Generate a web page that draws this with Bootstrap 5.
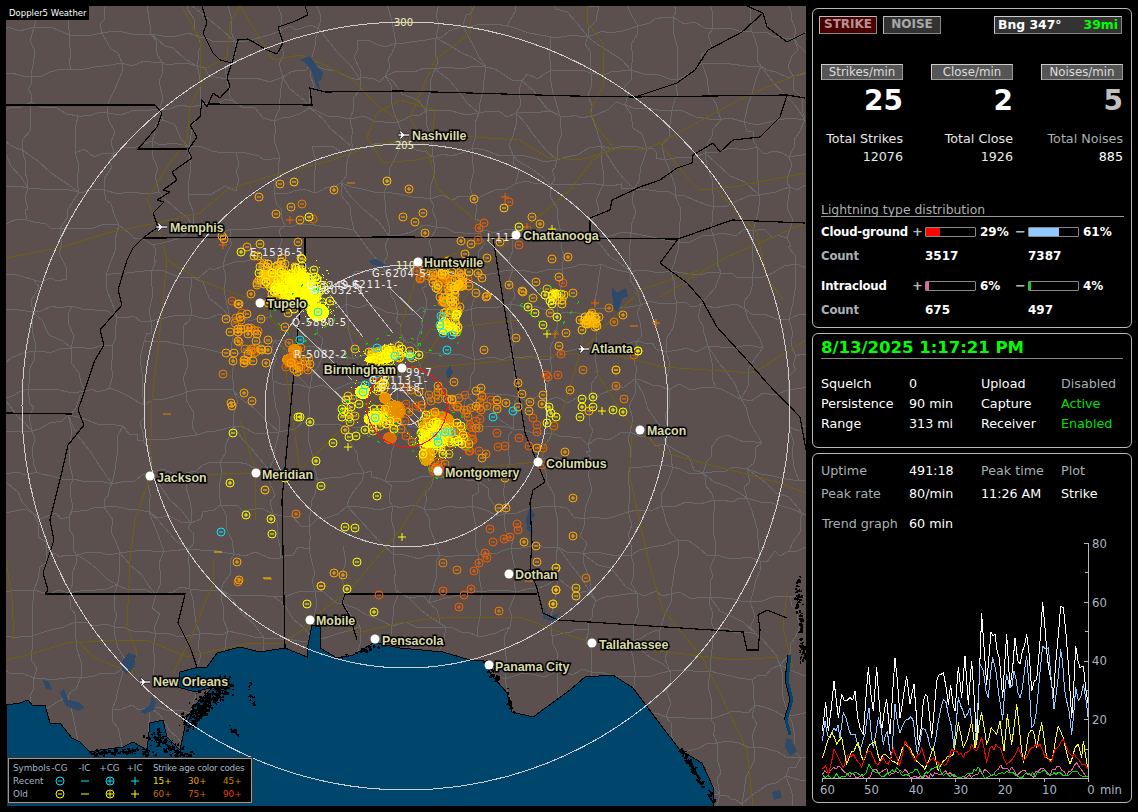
<!DOCTYPE html>
<html lang="en">
<head>
<meta charset="utf-8">
<title>Doppler5 Weather</title>
<link rel="stylesheet" href="https://cdn.jsdelivr.net/npm/bootstrap@5.3.0/dist/css/bootstrap.min.css">
<style>
html,body{background:#000;margin:0;height:100%;overflow:hidden}
body{font-family:"DejaVu Sans",sans-serif;font-size:12.7px;line-height:16px;color:#fff}
.app-shell{padding:6px;width:1138px;height:812px}
.map-wrap{width:800px;height:800px;flex:none;background:#5b504d}
.map-wrap svg{display:block}
.map-title{left:0;top:0;width:83px;height:14px;background:#000;color:#fff;font-size:8.5px;line-height:14px;padding-left:3px;white-space:nowrap}
.legend-box{left:2px;top:752px;width:244px;height:45px;background:#000;border:1px solid #9a9a9a;outline:1px solid #333;display:grid;grid-template-columns:34px 25px 25px 25px 25px 35px 35px 35px;grid-auto-rows:13px;padding:3px 0 0 4px;font-size:8.8px;line-height:13px;color:#a8b4c4;white-space:nowrap}
.legend-box>div{text-align:center}
.legend-box .lft{text-align:left}
.legend-box .age-title{grid-column:span 3;padding-left:6px;letter-spacing:-.28px}
.legend-box .agec{padding-left:6px;text-align:left}
.legend-box svg{display:inline-block;vertical-align:top;margin-top:1px}
.age1{color:#e8e000}.age2{color:#e8a000}.age3{color:#c88800}.age4{color:#c87000}.age5{color:#d86000}.age6{color:#e84000}
.side-col{width:320px;margin-left:6px;padding-top:2px}
.panel-box{border:1px solid #b8b8b8;border-radius:6px;background:#000;width:320px}
.panel-a{height:320px;padding:7px 8px 0 8px}
.panel-b{height:115px;margin-top:5px;padding:2px 8px 0 8px}
.panel-c{height:350px;margin-top:5px;padding:5px 8px 0 8px}
.mode-btn{width:58px;height:18px;flex:none;font-weight:700;font-size:12px;line-height:15px;text-align:center;border:1px solid #bbb;border-right-color:#888;border-bottom-color:#888}
.mode-strike{background:#4a0000;color:#b89090;margin-left:-2px}
.mode-noise{background:#333;color:#a8a8a8;margin-left:6px}
.bng-box{width:128px;height:18px;flex:none;background:#333;border:1px solid #ccc;border-right-color:#888;border-bottom-color:#888;font-weight:700;font-size:12.4px;line-height:15px;padding:0 3px;margin-left:53px}
.text-lime{color:#00ff00}
.stat-row{gap:28px;margin-top:30px}
.stat-col{width:82px;text-align:right}
.stat-label{height:16px;line-height:14px;background:#555;border:1px solid #ccc;border-right-color:#999;border-bottom-color:#999;color:#ddd;text-align:center;font-size:11.8px}
.stat-big{font-size:28px;line-height:32px;font-weight:700;margin-top:5px}
.stat-dim{color:#c0c0c0}
.stat-name{margin-top:13px;line-height:18px;color:#e8e8e8;white-space:nowrap}
.stat-name.dimtext{color:#a8b0b4}
.dist-title{margin-top:36px;color:#a8b0b4;border-bottom:1px solid #999;height:15px;line-height:16px;width:303px;white-space:nowrap;font-size:12.4px}
.dist-grid{display:grid;grid-template-columns:91px 13px 55px 35px 13px 55px 40px;width:306px;font-weight:700;font-size:12px;line-height:16px;margin-top:7px}
.dist-grid>div{height:24px;white-space:nowrap}
.dist-grid .tall-row{height:30px}
.dist-grid .lbl{font-size:11.7px;letter-spacing:-.2px}
.cnt{color:#a8b0b4}
.sgn{color:#b8b8b8;font-size:13px}
.meter{width:51px;height:10px;border:1px solid #888;border-radius:1px;margin-top:3px;background:#000}
.meter>i{display:block;height:100%}
.time-line{font-size:16.5px;line-height:24px;font-weight:700;color:#00ff00;border-bottom:1px solid #888;height:23px;margin-bottom:15px;white-space:nowrap}
.info-grid{display:grid;grid-template-columns:88px 72px 80px 70px;line-height:20px;white-space:nowrap}
.muted-c{color:#a8b0b4}
.green-c{color:#00e000}
.info-gridb{line-height:23px}
.trend-h{margin-top:11px;display:grid;grid-template-columns:87px 80px;line-height:16px;padding-left:1px}
.graph-wrap{display:block;width:310px;height:272px;margin:-1px 0 0 -1px}
.city-name{font-family:"Liberation Sans",sans-serif;font-weight:700;font-size:12.4px;fill:#dcdcaa;stroke:#000;stroke-width:3px;paint-order:stroke;stroke-linejoin:miter}
.storm-name{font-family:"DejaVu Sans",sans-serif;font-size:10px;letter-spacing:1px;fill:#f0f0f0}
.ring-name{font-family:"DejaVu Sans",sans-serif;font-size:10px;fill:#f0f0b8}
</style>
</head>
<body>
<div class="app-shell d-flex">
  <div class="map-wrap position-relative">
    <svg id="mapsvg" width="800" height="800" viewBox="6 6 800 800" shape-rendering="crispEdges"></svg>
    <div class="map-title position-absolute">Doppler5 Weather</div>
    <div class="legend-box position-absolute">
      <div class="lft">Symbols</div><div>-CG</div><div>-IC</div><div>+CG</div><div>+IC</div><div class="lft age-title">Strike age color codes</div>
      <div class="lft">Recent</div>
      <div><svg width="10" height="10" viewBox="0 0 10 10" fill="none" stroke="#00e8ff"><circle cx="5" cy="5" r="4"/><path d="M3 5h4"/></svg></div>
      <div><svg width="10" height="10" viewBox="0 0 10 10" fill="none" stroke="#00e8ff"><path d="M1 5h8"/></svg></div>
      <div><svg width="10" height="10" viewBox="0 0 10 10" fill="none" stroke="#00e8ff"><circle cx="5" cy="5" r="4"/><path d="M2 5h6M5 2v6"/></svg></div>
      <div><svg width="10" height="10" viewBox="0 0 10 10" fill="none" stroke="#00e8ff"><path d="M1 5h8M5 1v8"/></svg></div>
      <div class="agec age1">15+</div><div class="agec age2">30+</div><div class="agec age3">45+</div>
      <div class="lft">Old</div>
      <div><svg width="10" height="10" viewBox="0 0 10 10" fill="none" stroke="#ffff00"><circle cx="5" cy="5" r="4"/><path d="M3 5h4"/></svg></div>
      <div><svg width="10" height="10" viewBox="0 0 10 10" fill="none" stroke="#ffff00"><path d="M1 5h8"/></svg></div>
      <div><svg width="10" height="10" viewBox="0 0 10 10" fill="none" stroke="#ffff00"><circle cx="5" cy="5" r="4"/><path d="M2 5h6M5 2v6"/></svg></div>
      <div><svg width="10" height="10" viewBox="0 0 10 10" fill="none" stroke="#ffff00"><path d="M1 5h8M5 1v8"/></svg></div>
      <div class="agec age4">60+</div><div class="agec age5">75+</div><div class="agec age6">90+</div>
    </div>
  </div>
  <div class="side-col d-flex flex-column">
    <section class="panel-box panel-a">
      <div class="d-flex">
        <div class="mode-btn mode-strike">STRIKE</div>
        <div class="mode-btn mode-noise">NOISE</div>
        <div class="bng-box d-flex justify-content-between"><span>Bng 347°</span><span class="text-lime">39mi</span></div>
      </div>
      <div class="d-flex stat-row">
        <div class="stat-col"><div class="stat-label">Strikes/min</div><div class="stat-big">25</div><div class="stat-name">Total Strikes<br>12076</div></div>
        <div class="stat-col"><div class="stat-label">Close/min</div><div class="stat-big">2</div><div class="stat-name">Total Close<br>1926</div></div>
        <div class="stat-col"><div class="stat-label">Noises/min</div><div class="stat-big stat-dim">5</div><div class="stat-name dimtext">Total Noises<br><span class="text-white">885</span></div></div>
      </div>
      <div class="dist-title">Lightning type distribution</div>
      <div class="dist-grid">
        <div class="lbl">Cloud-ground</div><div class="sgn">+</div><div><div class="meter"><i style="width:29%;background:#ff0000"></i></div></div><div>29%</div><div class="sgn">−</div><div><div class="meter"><i style="width:61%;background:#90c8ff"></i></div></div><div>61%</div>
        <div class="cnt tall-row lbl">Count</div><div class="tall-row"></div><div class="tall-row">3517</div><div class="tall-row"></div><div class="tall-row"></div><div class="tall-row">7387</div><div class="tall-row"></div>
        <div class="lbl">Intracloud</div><div class="sgn">+</div><div><div class="meter"><i style="width:6%;background:#e860a8"></i></div></div><div>6%</div><div class="sgn">−</div><div><div class="meter"><i style="width:4%;background:#00e000"></i></div></div><div>4%</div>
        <div class="cnt lbl">Count</div><div></div><div>675</div><div></div><div></div><div>497</div><div></div>
      </div>
    </section>
    <section class="panel-box panel-b">
      <div class="time-line">8/13/2025 1:17:21 PM</div>
      <div class="info-grid">
        <div>Squelch</div><div>0</div><div>Upload</div><div class="muted-c">Disabled</div>
        <div>Persistence</div><div>90 min</div><div>Capture</div><div class="green-c">Active</div>
        <div>Range</div><div>313 mi</div><div>Receiver</div><div class="green-c">Enabled</div>
      </div>
    </section>
    <section class="panel-box panel-c">
      <div class="info-grid info-gridb">
        <div class="muted-c">Uptime</div><div>491:18</div><div class="muted-c">Peak time</div><div class="muted-c">Plot</div>
        <div class="muted-c">Peak rate</div><div>80/min</div><div>11:26 AM</div><div>Strike</div>
      </div>
      <div class="trend-h"><div class="muted-c">Trend graph</div><div>60 min</div></div>
      <svg class="graph-wrap" viewBox="30 0 930 816">
        <g fill="none" stroke-width="3" stroke-linejoin="round" shape-rendering="crispEdges">
          <polyline id="gw" stroke="#ffffff"/>
          <polyline id="gb" stroke="#90c8ff"/>
          <polyline id="gy" stroke="#ffff00"/>
          <polyline id="gp" stroke="#e860a8"/>
          <polyline id="gg" stroke="#00e000"/>
          <polyline id="gr" stroke="#ff0000"/>
        </g>
        <g stroke="#b8b8b8" stroke-width="3" fill="none" shape-rendering="crispEdges">
          <path d="M37 742H835M835 37V742M822 37h13M826 125h9M822 213h13M826 301h9M822 390h13M826 478h9M822 566h13M826 655h9"/>
          <path d="M37 742v12M170 742v12M303 742v12M436 742v12M569 742v12M702 742v12M835 742v12"/>
        </g>
        <g fill="#a8b8c8" font-family="'DejaVu Sans',sans-serif" font-size="35">
          <text x="846" y="50">80</text><text x="846" y="227">60</text><text x="846" y="402">40</text><text x="846" y="579">20</text>
          <text x="30" y="790">60</text><text x="162" y="790">50</text><text x="296" y="790">40</text><text x="430" y="790">30</text><text x="563" y="790">20</text><text x="696" y="790">10</text><text x="832" y="790">0</text><text x="870" y="790">min</text>
        </g>
      </svg>
    </section>
  </div>
</div>
<script src="https://cdn.jsdelivr.net/npm/bootstrap@5.3.0/dist/js/bootstrap.bundle.min.js"></script>
<script>
(function(){
/* seeded random */
var s=12345;function R(){s=(s+0x6D2B79F5)|0;var t=Math.imul(s^s>>>15,1|s);t=t+Math.imul(t^t>>>7,61|t)^t;return((t^t>>>14)>>>0)/4294967296;}
function G(){return (R()+R()+R()-1.5)/0.87;}

/* trend graph */
function line(id,pts){var o=[];for(var i=0;i<pts.length;i+=2){var x=pts[i],y=pts[i+1];o.push(x+','+y);
 if(i+2<pts.length){var nx=pts[i+2],ny=pts[i+3];if(nx-x>9){var n=Math.floor((nx-x)/6);for(var k=1;k<n;k++){var f=k/n;o.push((x+(nx-x)*f).toFixed(0)+','+(y+(ny-y)*f+(G()*((id=='gw'||id=='gb')?20:8))).toFixed(0));}}}}
 document.getElementById(id).setAttribute('points',o.join(' '));}
line('gw',[37,600,47,515,55,600,72,450,85,560,95,490,110,510,120,500,135,480,150,590,160,610,175,410,190,540,200,408,215,600,230,505,240,610,255,380,270,560,290,435,300,520,312,460,325,640,340,510,352,495,365,620,380,450,400,425,415,520,422,462,435,540,445,408,455,500,465,375,475,520,485,390,500,640,515,248,530,460,543,302,555,310,568,380,578,500,590,310,600,470,615,320,630,400,650,310,665,480,680,445,698,215,712,380,730,500,752,225,760,230,775,400,785,560,797,345,810,410,820,405,835,520]);
line('gb',[37,630,45,570,60,620,72,590,90,620,100,545,115,590,135,610,150,660,165,610,177,530,190,650,205,560,220,640,232,600,245,680,255,520,270,605,295,565,310,570,322,670,345,595,368,660,385,570,400,505,415,550,432,650,445,500,465,560,480,530,495,650,510,400,520,420,535,500,548,380,565,480,578,565,590,430,600,470,612,420,630,500,650,375,665,590,678,550,698,345,715,350,732,535,752,355,770,510,785,610,797,470,805,510,820,460,835,565]);
line('gy',[37,680,47,650,65,605,80,640,95,620,110,700,125,660,145,635,160,690,180,640,195,630,210,690,225,670,245,690,262,700,285,640,300,650,320,690,345,715,370,650,385,720,400,690,430,670,445,575,460,650,470,630,485,570,495,650,515,545,530,640,543,590,560,610,570,570,582,660,592,550,605,640,620,520,640,695,655,610,670,600,680,650,695,575,710,680,725,690,745,585,760,620,780,700,795,650,805,640,815,680,820,630,835,720]);
line('gr',[37,715,47,705,55,730,72,655,90,690,100,710,115,670,130,670,155,710,175,660,190,680,205,700,220,680,235,700,250,650,268,705,285,630,300,660,315,690,335,650,350,700,370,680,390,700,410,700,425,655,440,660,460,680,485,640,500,660,515,620,530,695,540,650,570,650,590,700,610,680,625,650,640,690,665,650,690,640,705,680,725,690,735,655,760,625,780,670,800,680,815,700,825,700,835,715]);
line('gg',[37,730,60,738,100,735,140,725,160,735,177,698,190,720,205,725,220,738,260,710,280,735,315,715,335,738,385,700,395,730,440,738,480,728,510,715,520,735,570,728,610,725,630,740,700,718,720,730,750,725,770,735,795,722,815,735,835,735]);
line('gp',[37,730,50,725,85,705,105,725,120,738,180,738,190,715,205,725,225,715,250,728,285,715,300,738,350,735,380,728,420,725,440,738,490,735,530,718,545,735,565,715,605,708,620,735,645,718,665,735,695,712,720,735,742,705,770,735,800,695,820,725,835,738]);

/* map */
var h=[];
h.push('<rect x="0" y="0" width="820" height="820" fill="#5b504d"/>');

/* county mesh */
var sp=40,cols=23,rows=23,P=[],i,j;
for(i=0;i<cols;i++){P[i]=[];for(j=0;j<rows;j++){P[i][j]=[i*sp-8+G()*11,j*sp-8+G()*11];}}
function wig(a,b){var n=4;var o='';for(var k=1;k<=n;k++){var f=k/n;var x=a[0]+(b[0]-a[0])*f,y=a[1]+(b[1]-a[1])*f;if(k<n){x+=G()*3.5;y+=G()*3.5;}o+=' L'+x.toFixed(0)+' '+y.toFixed(0);}return o;}
var cty='';
for(i=0;i<cols;i++)for(j=0;j<rows;j++){var p=P[i][j];
 if(i+1<cols&&R()>.1)cty+='M'+p[0].toFixed(0)+' '+p[1].toFixed(0)+wig(p,P[i+1][j]);
 if(j+1<rows&&R()>.1)cty+='M'+p[0].toFixed(0)+' '+p[1].toFixed(0)+wig(p,P[i][j+1]);
 if(i+1<cols&&j+1<rows&&R()>.82)cty+='M'+p[0].toFixed(0)+' '+p[1].toFixed(0)+wig(p,P[i+1][j+1]);}
h.push('<path d="'+cty+'" fill="none" stroke="#68696b" stroke-width="1"/>');

/* highways */
var hw=["182,6 200,40 200,87 190,107 187,140 167,167 147,200 157,223 167,260 160,330 152,400 150,476 135,520 130,560 127,627 137,653 132,673",
"240,6 230,23 227,57 203,70","240,6 263,43 273,60 300,55 320,63 353,80 380,108 400,120",
"400,100 377,113 367,137 383,163 415,160 430,157","6,258 63,247 107,233 157,223 200,213 227,190 267,177 333,160 367,147 400,140",
"472,6 470,33 435,60 423,87 410,117 430,157 437,188 470,215 490,240 452,255 420,265 400,330 402,370 430,430 438,470 400,530 350,590 310,620",
"588,6 587,23 603,43 603,87 590,110 597,127 613,147 593,160 570,190 538,217 515,235 495,255 470,290 420,365 402,370",
"400,100 435,110 433,133 473,137 520,140 547,157 580,160 620,148 643,150 660,143 733,103 767,87 805,72",
"660,143 687,177 700,190 733,187 805,173","717,190 757,233 767,277 783,300","660,297 727,257 805,223",
"402,370 300,470 256,473 150,476","255,300 300,300 350,330 402,368 430,330 520,320","167,260 200,280 260,303 280,330 300,470",
"580,353 480,363 402,370","580,353 640,290 700,270","607,353 663,367 753,373 806,340","595,370 627,420 665,453 780,483 806,493",
"632,437 630,477 650,567 663,610 702,657 720,693 747,750 753,806","580,353 585,320 600,300","580,353 560,420 538,462 438,471",
"400,623 443,617 520,617 560,632 590,642 667,652 733,660 780,657","787,593 783,627 793,667",
"6,660 27,655 67,643 117,640 147,640 187,657 217,650 250,643 283,643 307,627 337,623 357,633 400,623",
"213,560 213,583 190,640 173,673","80,643 93,657 132,673","6,560 12,600 14,640","255,520 256,473 240,420"];
var hwd='';hw.forEach(function(l){hwd+='M'+l.replace(/ /g,' L').replace(/,/g,' ');});
h.push('<path d="'+hwd+'" fill="none" stroke="#6f5f12" stroke-width="1"/>');

/* sea */
var sea="6,705 20,703 28,700 33,706 45,705 50,723 60,723 72,738 80,742 90,752 100,750 123,747 133,742 147,750 150,723 163,720 167,737 180,750 187,717 197,703 213,687 195,692 178,687 180,672 195,668 207,667 217,653 240,647 260,652 285,648 307,657 307,650 312,625 320,627 320,648 337,658 353,655 375,642 385,645 400,648 443,652 470,660 483,660 490,673 507,693 512,712 533,717 570,690 585,677 613,675 633,688 657,720 680,750 702,763 713,787 713,806 6,806";
h.push('<polygon points="'+sea+'" fill="#00456b" stroke="#000" stroke-width="1"/>');
/* coastal fuzz */
function fuzz(x1,y1,x2,y2,n,sd,c){var d='';for(var k=0;k<n;k++){var f=R();var x=x1+(x2-x1)*f+G()*sd,y=y1+(y2-y1)*f+G()*sd;d+='M'+x.toFixed(0)+' '+y.toFixed(0)+'h'+(1+Math.floor(R()*3))+'v'+(1+Math.floor(R()*3))+'h-'+(1+Math.floor(R()*3))+'z';}h.push('<path d="'+d+'" fill="'+c+'"/>');}
fuzz(187,722,225,682,320,8,'#000');fuzz(150,735,190,760,150,7,'#000');fuzz(90,752,150,750,90,3,'#000');fuzz(248,682,253,705,15,2,'#000');fuzz(228,725,240,735,8,2,'#000');
fuzz(680,750,713,800,90,2.5,'#000');fuzz(796,575,803,660,90,3,'#000');fuzz(505,690,512,712,20,2,'#000');fuzz(485,660,497,680,25,3,'#000');fuzz(340,657,380,644,25,2,'#000');
h.push('<path d="M790 655L787 680 792 700 786 720 790 735" fill="none" stroke="#00456b" stroke-width="3"/><path d="M788 655L785 680 790 700 784 720" fill="none" stroke="#000" stroke-width="1"/>');
/* lakes */
var lk="#2e4a68";
['300,60 310,56 318,68 323,72 322,78 318,83 323,96 316,85 312,72 305,62','122,662 128,653 136,655 134,668 126,674 122,670','43,680 49,682 52,690 46,689','60,693 64,688 68,700 78,702 84,708 78,711 66,706','140,712 150,705 152,695 156,702 154,710 145,714','368,261 376,259 384,264 392,268 382,266 372,265','446,372 450,365 453,372 450,378 447,378','612,287 617,293 626,288 628,296 618,300 612,298','530,507 535,515 529,525 534,533 527,530 526,518','544,608 548,618 560,612 553,622 543,618','786,738 792,740 797,752 790,756 785,748','772,792 780,790 782,798 774,800','614,293 620,291 622,300 618,312 612,308'].forEach(function(l){h.push('<polygon points="'+l+'" fill="'+lk+'"/>');});

/* state lines */
var st=["209,104 312,105 310,88 325,92 400,91 573,96 635,97 787,95 805,98",
"202,6 207,23 203,33 213,53 220,60 232,63 227,77 230,87 220,98 213,93 207,107 202,100 200,117 190,125 197,137 188,150 192,158 172,172 177,180 163,190 170,192 157,200 164,202 153,213 158,227 143,238 133,248 127,260 118,290 122,305 100,330 104,345 95,360 78,410 84,425 68,445 60,480 50,520 54,540 43,573 48,590 45,594",
"232,63 238,40 248,39 267,50 277,54 283,43 278,27 293,22 308,15 305,6",
"6,105 155,105 162,113 157,127 138,149 187,149","143,238 400,237 678,239","6,413 72,414",
"590,238 590,218 610,210 612,200 640,187 660,180 677,168 692,163 693,155 713,143 720,152 733,140 760,137 780,117 787,95",
"635,97 677,83 695,70 708,50 742,32 763,13 747,6","763,13 767,27 787,42 805,33",
"678,239 732,220 805,223","678,239 660,263 687,283 702,300 717,327 747,360 767,383 800,417 806,450",
"493,238 503,300 515,370 525,433 535,457 545,482 533,490 530,503 532,543 530,570 537,588 543,613 558,620 743,632 747,650 758,650 760,630 758,615 767,610 787,618",
"305,238 305,262 298,330 282,500 285,648","345,594 537,594","345,594 342,603 350,617 357,640","45,594 185,594 178,623 190,647 197,667"];
var std='';st.forEach(function(l){std+='M'+l.replace(/ /g,' L').replace(/,/g,' ');});
h.push('<path d="'+std+'" fill="none" stroke="#000" stroke-width="1.2"/>');

/* rings */
h.push('<g fill="none" stroke="#d0d0d0" stroke-width="1"><circle cx="406" cy="406" r="384"/><circle cx="406" cy="406" r="262"/><circle cx="406" cy="406" r="141"/><circle cx="406" cy="406" r="19"/></g>');
h.push('<path fill="none" stroke="#c0c0c0" stroke-width="1" d="M260 257L317 317M330 295L363 337M353 283L393 333M390 288L423 320M302 360L352 408M292 323L352 380M400 387L427 417M390 397L437 447M407 407L427 427M487 240L545 300"/>');

/* strikes */
var C={Y:'#ffff00',G:'#ffc800',O:'#ffa800',D:'#e88000',R:'#f06000',C:'#00e8ff'},B={R:'',D:'',O:'',G:'',Y:'',C:''};
function sym(x,y,t,c){x=Math.round(x);y=Math.round(y);var d='';
 if(t=='m'||t=='p')d+='M'+(x-4)+' '+y+'a4 4 0 1 0 8 0a4 4 0 1 0-8 0';
 if(t=='m')d+='M'+(x-2)+' '+y+'h4';
 if(t=='p')d+='M'+(x-2)+' '+y+'h4M'+x+' '+(y-2)+'v4';
 if(t=='d')d+='M'+(x-4)+' '+y+'h8';
 if(t=='a')d+='M'+(x-4)+' '+y+'h8M'+x+' '+(y-4)+'v8';
 B[c]+=d;}
/* hand-placed: colour x,y,type */
var hand={
O:"280,184,m 259,197,m 291,207,m 276,214,m 300,220,m 222,236,m 224,239,m 247,247,m 298,242,m 334,190,p 409,189,p 474,199,p 423,213,m 403,217,m 415,222,m 425,233,p 461,241,p 471,244,m 500,242,m 532,217,m 540,224,p 487,258,m 465,254,m 552,259,m 568,257,p 509,285,p 522,291,m 476,293,m 487,296,p 478,273,p 482,278,m 536,282,m 559,277,m 573,293,m 486,297,m 523,292,m 533,298,m 550,313,m 566,333,m 559,346,m 589,317,p 623,315,p 484,350,m 516,338,m 570,390,m 518,383,p 522,394,m 543,395,m 497,400,m 506,403,p 530,402,m 542,404,p 529,411,m 518,407,m 497,409,m 589,411,m 482,458,m 537,448,m 565,452,p 505,478,m 573,498,p 499,508,m 506,508,m 573,536,p 524,542,p 536,546,m 537,562,m 556,568,m 553,604,p 556,590,p 334,573,p 321,586,m 237,562,p 252,401,m 232,406,p 231,403,p 244,393,p 239,580,p 343,575,p",
D:"238,582,m 302,204,m 268,579,d 616,386,p 624,399,m 609,308,p 614,322,p 583,370,m 616,370,m 443,563,m 457,570,m 499,611,p 529,581,d 586,578,m 634,326,d 656,323,a 167,414,d 351,183,d 296,514,p",
R:"290,220,a 313,219,m 223,245,a 484,223,m 479,228,p 478,240,p 505,197,a 509,202,m 527,227,a 519,245,m 468,279,m 563,283,m 379,595,m 474,571,p 479,563,p 443,591,p 471,589,p 464,595,m 459,607,p 595,303,a 546,375,m 548,377,m 558,375,p 561,354,p 555,334,a 554,426,m 533,418,m 537,425,m 537,432,m 482,397,m 497,433,m 519,438,m 498,447,m 505,446,m 529,446,m 543,448,m 542,465,m 517,524,m 518,530,m 490,529,m 510,537,p 504,539,p 493,542,m 485,553,p 487,558,p 634,355,m",
G:"387,181,p 294,182,m 218,552,d 267,578,d 504,208,m 556,568,m 576,588,m 576,596,m 556,590,p 553,604,p 321,586,m 638,351,m 616,370,m 265,490,m 270,475,m",
Y:"309,217,m 241,252,p 357,562,m 347,589,p 374,612,p 307,604,m 519,227,m 552,229,a 528,307,p 535,313,m 543,325,m 557,317,p 547,334,a 549,407,p 551,413,p 556,417,m 547,423,p 582,399,m 593,397,p 582,407,p 593,407,m 580,417,m 602,411,a 613,410,p 623,412,p 638,351,p 233,433,m 300,417,p 310,422,p 316,461,p 333,443,m 285,478,p 321,486,m 230,483,p 377,496,m 348,447,a 349,437,m 356,436,m 365,430,p 372,427,p 342,417,m 342,409,p 346,400,m 246,515,p 271,519,p 272,534,m 345,527,m 355,528,m 402,537,a 298,417,m",
C:"221,532,m 513,411,m 493,417,m 377,374,m 300,340,m 318,312,m 315,290,p 440,325,m 443,333,m 452,335,m 441,316,m 447,350,m 377,348,m 395,356,m 410,356,m 363,392,m 365,385,m 375,418,m 445,432,p 437,436,p 452,432,m 438,442,m"};
Object.keys(hand).forEach(function(c){hand[c].split(' ').forEach(function(e){var a=e.split(',');sym(+a[0],+a[1],a[2],c);});});
/* clusters */
function cl(cx,cy,sx,sy,n,cs,tp){for(var k=0;k<n;k++){var c=cs.charAt(Math.floor(R()*cs.length)),t=(tp||'mmmp').charAt(Math.floor(R()*(tp||'mmmp').length));sym(cx+G()*sx,cy+G()*sy,t,c);}}
cl(285,282,18,20,110,'GGOY');cl(268,272,14,18,30,'OG');cl(250,345,22,25,38,'OOD','mmpp');cl(238,315,12,18,12,'ODR');cl(295,360,14,12,26,'ODR','mmp');
cl(448,292,11,24,55,'OGD','mmpp');cl(462,280,7,10,14,'GO');cl(430,278,12,8,14,'ODR');cl(452,320,9,16,20,'GY');
cl(385,355,26,9,26,'GY');cl(450,400,30,14,18,'OD');cl(380,380,10,10,10,'YG');cl(475,410,18,18,18,'RD');cl(470,445,14,14,14,'DR');
cl(590,320,10,8,18,'GO');cl(555,298,8,8,14,'YG');cl(443,465,12,8,10,'DR');cl(350,410,8,18,10,'YG');cl(420,410,25,30,20,'DR');
cl(437,437,22,16,60,'YG');cl(305,292,20,16,70,'YY');cl(378,418,14,10,22,'YG');
var blobs=[[385,398,6,6,0,'#e89000'],[393,412,13,11,-30,'#e89000'],[390,438,7,6,0,'#d86a10'],[433,416,9,7,0,'#d86a10'],[457,430,9,8,0,'#d86a10'],[437,425,18,13,-20,'#e89000'],[427,455,8,11,10,'#e8a000'],[295,350,7,6,0,'#e89000'],[289,360,7,6,0,'#e89000'],[460,287,7,4,0,'#e8a000'],[295,282,15,13,0,'#ffc800'],[385,353,18,7,-5,'#e8a000'],[590,322,9,5,0,'#e8a000'],
[303,292,18,11,30,'#ffff00'],[318,312,11,9,10,'#ffff00'],[381,358,16,6,-5,'#ffff00'],[363,392,8,7,0,'#ffff00'],[376,418,12,7,-15,'#ffff00'],[435,437,17,10,-20,'#ffff00'],[444,326,7,9,10,'#ffff00'],[409,355,6,3,0,'#ffff00'],[555,293,5,3,30,'#ffff00']];
blobs.forEach(function(b){h.push('<ellipse cx="'+b[0]+'" cy="'+b[1]+'" rx="'+b[2]+'" ry="'+b[3]+'" transform="rotate('+b[4]+' '+b[0]+' '+b[1]+')" fill="'+b[5]+'"/>');});
['R','D','O','G','Y'].forEach(function(c){h.push('<path d="'+B[c]+'" fill="none" stroke="'+C[c]+'" stroke-width="1" shape-rendering="auto"/>');});
/* yellow stipple */
var dots='';[[303,285,30,22,420],[318,312,18,14,120],[385,355,30,13,110],[437,437,28,20,170],[376,416,22,15,70],[363,390,15,14,40]].forEach(function(b){for(var k=0;k<b[4];k++){dots+='M'+Math.round(b[0]+G()*b[2]/1.4)+' '+Math.round(b[1]+G()*b[3]/1.4)+'h1v1h-1z';}});
h.push('<path d="'+dots+'" fill="#ffff00"/>');
h.push('<path d="'+B.C+'" fill="none" stroke="'+C.C+'" stroke-width="1" shape-rendering="auto"/>');
/* storm-cell dashed polygons */
h.push('<g fill="none" stroke="#00e000" stroke-width="1" stroke-dasharray="3 9"><polygon points="423,312 445,300 462,338 445,358 420,345"/><polygon points="344,355 385,335 420,340 412,368 360,372"/><polygon points="340,412 352,395 400,425 385,445 360,432"/><polygon points="412,450 440,482 472,445 460,412 425,415"/><polygon points="270,315 300,345 335,320 310,278"/><polygon points="520,305 545,285 580,300 555,335"/></g>');
/* red cell */
h.push('<circle cx="407" cy="407" r="40" fill="none" stroke="#ff1010" stroke-width="1"/>');

/* range labels */
h.push('<text class="ring-name" x="394" y="26">300</text><text class="ring-name" x="395" y="149">205</text><text class="ring-name" x="396" y="269">110</text>');
/* storm labels */
[[250,256,'E-1536-5'],[307,289,'U-3249-5'],[310,294,'G-6032-1-'],[340,288,'S-6211-1-'],[292,326,'Q-5880-5'],[294,358,'R-5082-2'],[372,277,'G-6204-5-'],[487,241,'I-11-'],[406,376,'99-7'],[369,384,'G-5113-1-'],[378,391,'G-4218-']].forEach(function(a){h.push('<text class="storm-name" x="'+a[0]+'" y="'+a[1]+'">'+a[2]+'</text>');});

/* cities */
var plane='M-6 -1h3l-2 -3h2l3 3h4c1 0 2 .5 2 1s-1 1-2 1h-4l-3 3h-2l2 -3h-3z';
function city(kind,x,y,name,tx,ty,anc){
 if(kind=='p')h.push('<path transform="translate('+x+' '+y+')" d="'+plane+'" fill="#fff" stroke="#000" stroke-width=".6" shape-rendering="auto"/>');
 else h.push('<circle cx="'+x+'" cy="'+y+'" r="4.5" fill="#fff" shape-rendering="auto"/>');
 h.push('<text class="city-name" x="'+tx+'" y="'+ty+'"'+(anc?' text-anchor="end"':'')+'>'+name+'</text>');}
city('p',404,135,'Nashville',412,140);city('p',162,227,'Memphis',170,232);city('d',516,235,'Chattanooga',523,240);
city('d',418,262,'Huntsville',424,267);city('d',260,303,'Tupelo',267,308);city('p',584,349,'Atlanta',591,353);
city('d',402,368,'Birmingham',396,374,1);city('d',640,430,'Macon',647,435);city('d',538,462,'Columbus',546,468);
city('d',438,471,'Montgomery',445,477);city('d',150,476,'Jackson',157,482);city('d',256,473,'Meridian',262,479);
city('d',509,574,'Dothan',515,579);city('d',310,620,'Mobile',316,625);city('d',375,639,'Pensacola',382,645);
city('d',592,643,'Tallahassee',599,649);city('d',489,665,'Panama City',495,671);city('p',145,682,'New Orleans',153,686);

document.getElementById('mapsvg').innerHTML=h.join('');
})();
</script>
</body>
</html>
